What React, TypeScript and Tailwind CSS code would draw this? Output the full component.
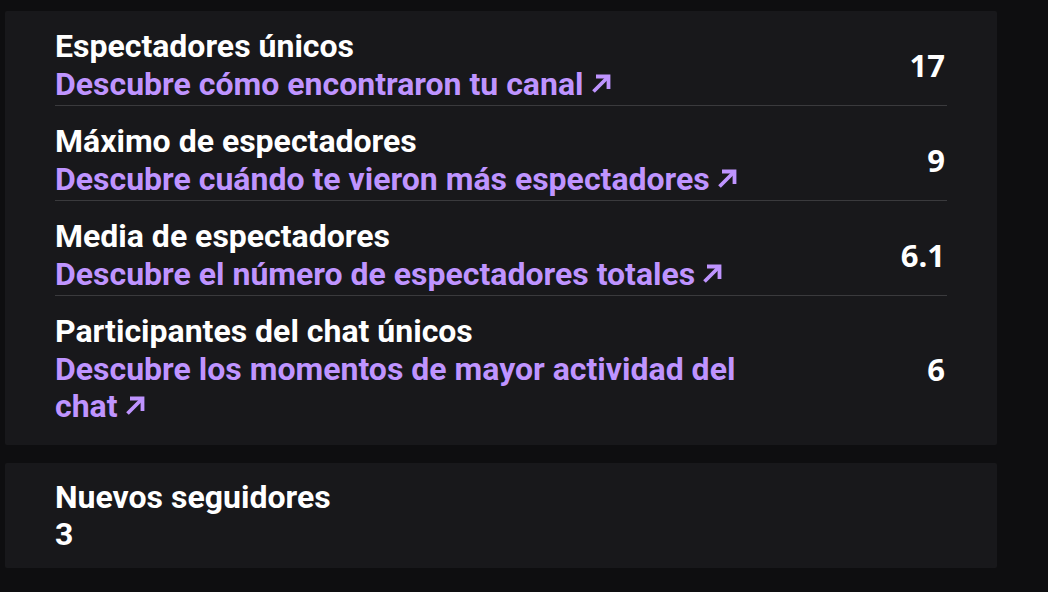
// one stat row: title, purple link, value at the right
interface Stat {
  title: string;
  link: string;
  value: string;
}

const stats: Stat[] = [
  { title: 'Espectadores únicos', link: 'Descubre cómo encontraron tu canal', value: '17' },
  { title: 'Máximo de espectadores', link: 'Descubre cuándo te vieron más espectadores', value: '9' },
  { title: 'Media de espectadores', link: 'Descubre el número de espectadores totales', value: '6.1' },
  {
    title: 'Participantes del chat únicos',
    link: 'Descubre los momentos de mayor actividad del chat',
    value: '6',
  },
];

// — bold north-east arrow next to the links
function LinkArrow() {
  return (
    <svg
      viewBox="0 0 22 22"
      className="inline-block align-baseline ml-[6px] w-[22px] h-[22px]"
      fill="none"
      stroke="currentColor"
      strokeWidth={3.8}
      strokeLinejoin="miter"
    >
      <path d="M6 3.5 H18.5 V16" />
      <path d="M18.5 3.5 L3.5 18.5" />
    </svg>
  );
}

function StatRow({ stat, last }: { stat: Stat; last: boolean }) {
  return (
    <div className={`flex items-center pt-[15px] ${last ? 'pb-[18px]' : 'border-b border-[#3a3a3d]'}`}>
      <div className="max-w-[720px] flex-1">
        <div className="text-[32px] leading-[40px] font-bold text-white">{stat.title}</div>
        <a className="text-[32px] leading-[37px] font-bold text-[#bf94ff] pb-[2px] block">
          {stat.link}
          <LinkArrow />
        </a>
      </div>
      <div className="ml-auto text-[31px] font-bold text-white font-['Open_Sans',sans-serif] pr-[2px]">
        {stat.value}
      </div>
    </div>
  );
}

export default function App() {
  return (
    <div className="w-[1048px] h-[592px] bg-[#0e0e10] font-['Roboto',sans-serif] pt-[11px] overflow-hidden">
      <div className="w-[992px] ml-[5px] bg-[#18181b] rounded-[2px] px-[50px]">
        {stats.map((s, i) => (
          <StatRow key={s.title} stat={s} last={i === stats.length - 1} />
        ))}
      </div>

      {/* — followers card */}
      <div className="w-[992px] ml-[5px] mt-[18px] bg-[#18181b] rounded-[2px] px-[50px] pt-[15px] pb-[16px]">
        <div className="text-[32px] leading-[38px] font-bold text-white">Nuevos seguidores</div>
        <div className="text-[32px] leading-[36px] font-bold text-white">3</div>
      </div>
    </div>
  );
}
